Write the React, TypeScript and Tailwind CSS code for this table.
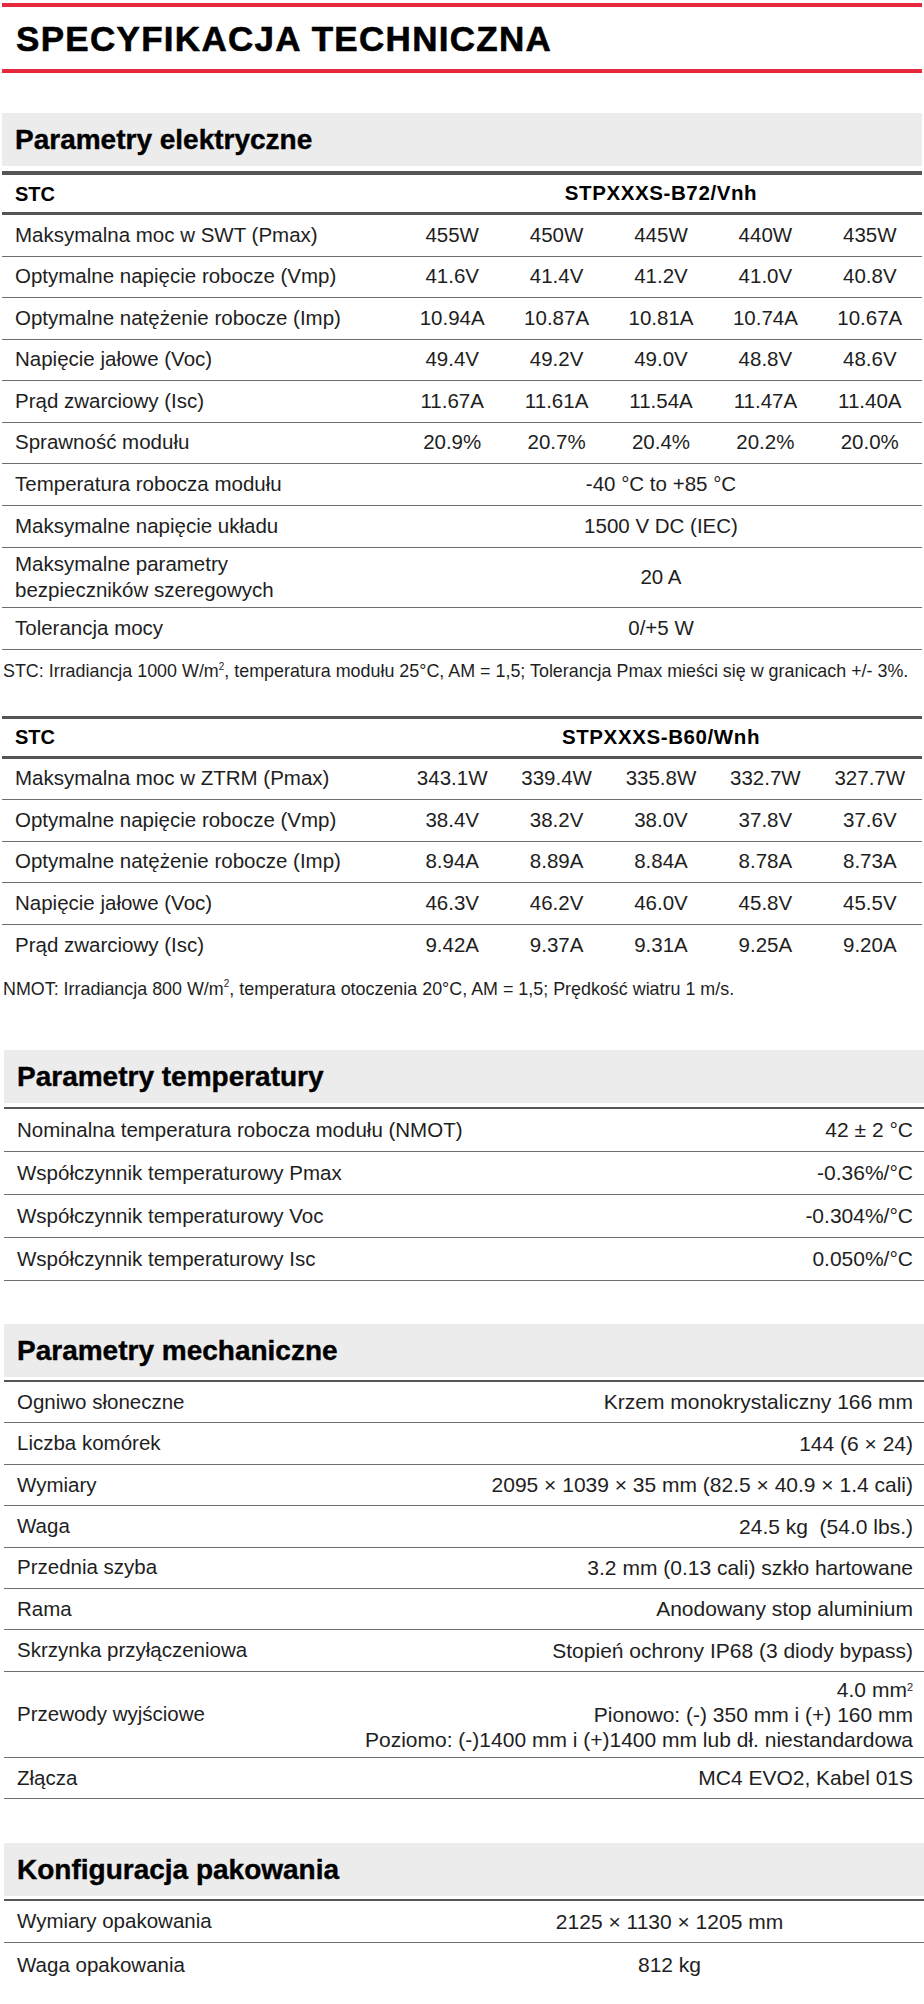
import React from "react";

type Row5 = { label: string; values: string[] };
type Pair = { label: React.ReactNode; value: React.ReactNode; tall?: boolean };

const b72: Row5[] = [
  { label: "Maksymalna moc w SWT (Pmax)", values: ["455W", "450W", "445W", "440W", "435W"] },
  { label: "Optymalne napięcie robocze (Vmp)", values: ["41.6V", "41.4V", "41.2V", "41.0V", "40.8V"] },
  { label: "Optymalne natężenie robocze (Imp)", values: ["10.94A", "10.87A", "10.81A", "10.74A", "10.67A"] },
  { label: "Napięcie jałowe (Voc)", values: ["49.4V", "49.2V", "49.0V", "48.8V", "48.6V"] },
  { label: "Prąd zwarciowy (Isc)", values: ["11.67A", "11.61A", "11.54A", "11.47A", "11.40A"] },
  { label: "Sprawność modułu", values: ["20.9%", "20.7%", "20.4%", "20.2%", "20.0%"] },
];

const b60: Row5[] = [
  { label: "Maksymalna moc w ZTRM (Pmax)", values: ["343.1W", "339.4W", "335.8W", "332.7W", "327.7W"] },
  { label: "Optymalne napięcie robocze (Vmp)", values: ["38.4V", "38.2V", "38.0V", "37.8V", "37.6V"] },
  { label: "Optymalne natężenie robocze (Imp)", values: ["8.94A", "8.89A", "8.84A", "8.78A", "8.73A"] },
  { label: "Napięcie jałowe (Voc)", values: ["46.3V", "46.2V", "46.0V", "45.8V", "45.5V"] },
  { label: "Prąd zwarciowy (Isc)", values: ["9.42A", "9.37A", "9.31A", "9.25A", "9.20A"] },
];

const temp: Pair[] = [
  { label: "Nominalna temperatura robocza modułu (NMOT)", value: "42 ± 2 °C" },
  { label: "Współczynnik temperaturowy Pmax", value: "-0.36%/°C" },
  { label: "Współczynnik temperaturowy Voc", value: "-0.304%/°C" },
  { label: "Współczynnik temperaturowy Isc", value: "0.050%/°C" },
];

const mech: Pair[] = [
  { label: "Ogniwo słoneczne", value: "Krzem monokrystaliczny 166 mm" },
  { label: "Liczba komórek", value: "144 (6 × 24)" },
  { label: "Wymiary", value: "2095 × 1039 × 35 mm (82.5 × 40.9 × 1.4 cali)" },
  { label: "Waga", value: "24.5 kg\u00a0 (54.0 lbs.)" },
  { label: "Przednia szyba", value: "3.2 mm (0.13 cali) szkło hartowane" },
  { label: "Rama", value: "Anodowany stop aluminium" },
  { label: "Skrzynka przyłączeniowa", value: "Stopień ochrony IP68 (3 diody bypass)" },
  {
    label: "Przewody wyjściowe",
    tall: true,
    value: (
      <>
        <div>
          4.0 mm<sup className="text-[11px]">2</sup>
        </div>
        <div>Pionowo: (-) 350 mm i (+) 160 mm</div>
        <div>Poziomo: (-)1400 mm i (+)1400 mm lub dł. niestandardowa</div>
      </>
    ),
  },
  { label: "Złącza", value: "MC4 EVO2, Kabel 01S" },
];

function SectionHeader({ title }: { title: string }) {
  return (
    <div className="h-[53px] bg-[#ececec] flex items-center pl-[13px]">
      <h2 className="text-[28px] font-bold leading-none text-black [-webkit-text-stroke:0.4px_#000]">{title}</h2>
    </div>
  );
}

function ModelHead({ model }: { model: string }) {
  return (
    <div className="grid grid-cols-[398px_1fr] h-[37px] items-center font-bold text-black">
      <div className="pl-[13px] text-[20px]">STC</div>
      <div className="text-center text-[20.5px] tracking-[0.6px]">{model}</div>
    </div>
  );
}

function FiveRow({ row, last }: { row: Row5; last?: boolean }) {
  return (
    <div
      className={`grid grid-cols-[398px_repeat(5,1fr)] h-[41.5px] items-center ${
        last ? "" : "border-b border-[#6e6e6e]"
      }`}
    >
      <div className="pl-[13px]">{row.label}</div>
      {row.values.map((v) => (
        <div key={v} className="text-center">
          {v}
        </div>
      ))}
    </div>
  );
}

function MergedRow({ label, value, h }: { label: React.ReactNode; value: string; h: string }) {
  return (
    <div className={`grid grid-cols-[398px_1fr] ${h} items-center border-b border-[#6e6e6e]`}>
      <div className="pl-[13px]">{label}</div>
      <div className="text-center">{value}</div>
    </div>
  );
}

function RightRow({ item, h }: { item: Pair; h: string }) {
  return (
    <div className={`flex justify-between items-center ${item.tall ? "h-[86px]" : h} border-b border-[#6e6e6e]`}>
      <div className="pl-[13px]">{item.label}</div>
      <div className={`pr-[11px] text-right text-[21px] ${item.tall ? "leading-[25px]" : ""}`}>{item.value}</div>
    </div>
  );
}

export default function App() {
  return (
    <div className="w-[924px] min-h-[2004px] bg-white text-[20.5px] text-[#1e1e1e] font-['Liberation_Sans',Arial,sans-serif]">
      {/* Title */}
      <div className="pt-[3px] px-[2px]">
        <div className="h-1 bg-[#e8283b]" />
        <div className="h-[62px] flex items-center pl-[14px]">
          <h1 className="text-[35px] font-bold leading-none tracking-[1.3px] text-black [-webkit-text-stroke:0.6px_#000]">
            SPECYFIKACJA TECHNICZNA
          </h1>
        </div>
        <div className="h-1 bg-[#e8283b]" />
      </div>

      {/* Parametry elektryczne */}
      <section className="mt-[40px] px-[2px]">
        <SectionHeader title="Parametry elektryczne" />
        <div className="mt-[5px] h-1 bg-[#555]" />
        <ModelHead model="STPXXXS-B72/Vnh" />
        <div className="h-[3px] bg-[#555]" />
        {b72.map((r) => (
          <FiveRow key={r.label} row={r} />
        ))}
        <MergedRow label="Temperatura robocza modułu" value="-40 °C to +85 °C" h="h-[41.5px]" />
        <MergedRow label="Maksymalne napięcie układu" value="1500 V DC (IEC)" h="h-[42px]" />
        <MergedRow
          label={
            <div className="leading-[26px]">
              Maksymalne parametry
              <br />
              bezpieczników szeregowych
            </div>
          }
          value="20 A"
          h="h-[60px]"
        />
        <MergedRow label="Tolerancja mocy" value="0/+5 W" h="h-[42px]" />
        <p className="h-[44px] flex items-center pl-[1px] text-[17.9px] whitespace-nowrap">
          STC: Irradiancja 1000 W/m<sup className="text-[10px]">2</sup>, temperatura modułu 25°C, AM = 1,5; Tolerancja Pmax mieści się w granicach +/- 3%.
        </p>

        <div className="mt-[22px] h-[3px] bg-[#555]" />
        <ModelHead model="STPXXXS-B60/Wnh" />
        <div className="h-[3px] bg-[#555]" />
        {b60.map((r, i) => (
          <FiveRow key={r.label} row={r} last={i === b60.length - 1} />
        ))}
        <p className="h-[46px] flex items-center pl-[1px] text-[17.9px] whitespace-nowrap">
          NMOT: Irradiancja 800 W/m<sup className="text-[10px]">2</sup>, temperatura otoczenia 20°C, AM = 1,5; Prędkość wiatru 1 m/s.
        </p>
      </section>

      {/* Parametry temperatury */}
      <section className="mt-[38px] pl-[4px]">
        <SectionHeader title="Parametry temperatury" />
        <div className="mt-[4px] h-[2px] bg-[#555]" />
        {temp.map((t) => (
          <RightRow key={t.value as string} item={t} h="h-[43px]" />
        ))}
      </section>

      {/* Parametry mechaniczne */}
      <section className="mt-[43px] pl-[4px]">
        <SectionHeader title="Parametry mechaniczne" />
        <div className="mt-[3px] h-[2px] bg-[#555]" />
        {mech.map((m, i) => (
          <RightRow key={i} item={m} h="h-[41.4px]" />
        ))}
      </section>

      {/* Konfiguracja pakowania */}
      <section className="mt-[44px] pl-[4px]">
        <SectionHeader title="Konfiguracja pakowania" />
        <div className="mt-[3px] h-[2px] bg-[#555]" />
        <div className="grid grid-cols-[411px_1fr] h-[42px] items-center border-b border-[#6e6e6e]">
          <div className="pl-[13px]">Wymiary opakowania</div>
          <div className="text-center text-[21px]">2125 × 1130 × 1205 mm</div>
        </div>
        <div className="grid grid-cols-[411px_1fr] h-[44px] items-center">
          <div className="pl-[13px]">Waga opakowania</div>
          <div className="text-center text-[21px]">812 kg</div>
        </div>
      </section>
    </div>
  );
}
